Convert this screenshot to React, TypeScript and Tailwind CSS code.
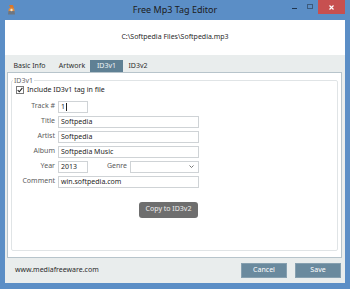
import type { ReactNode } from 'react'

// Free Mp3 Tag Editor — ID3v1 tab, shrunk Windows 8 style dialog.

const font = { fontFamily: '"Noto Sans", "Open Sans", Arial, sans-serif' }

const TABS = ['Basic Info', 'Artwork', 'ID3v1', 'ID3v2']
const tabWidths = ['w-[37px]', 'ml-[6px] w-[36px]', 'w-[33px]', 'w-[30px]']

const inputClass =
  'h-[12px] border border-[#cfd3d6] bg-white px-[2px] text-[7px] leading-[10px] text-[#1f1f1f] flex items-center'

function Row({ label, children }: { label: string; children: ReactNode }) {
  return (
    <div className="flex items-center">
      <span className="w-[43px] text-right text-[7px] text-[#5b5b5b]">{label}</span>
      <div className="ml-[3px] flex items-center">{children}</div>
    </div>
  )
}

function AppIcon() {
  return (
    <svg width="9" height="11" viewBox="0 0 9 11">
      <path d="M2 1 L6 1 L7 4 L4 5 Z" fill="#d9772b" />
      <circle cx="4.5" cy="6.5" r="3" fill="#e08a3a" />
      <path d="M1.5 7 L7.5 7 L8 10.5 L1 10.5 Z" fill="#6f7680" />
      <circle cx="4.5" cy="6" r="1.2" fill="#f6e2c4" />
    </svg>
  )
}

export default function App() {
  return (
    <div className="flex h-[289px] w-[350px] flex-col bg-[#5b8ec6]" style={font}>
      {/* title bar */}
      <div className="relative flex h-[20px] items-center">
        <div className="ml-[7px] mt-[-2px]">
          <AppIcon />
        </div>
        <div className="absolute inset-x-0 top-[4px] text-center text-[9px] leading-[11px] text-[#1b1b1b]">
          Free Mp3 Tag Editor
        </div>
        <div className="ml-auto flex h-full items-start">
          <div className="mt-[8px] h-[1px] w-[5px] bg-[#1f3550]" />
          <div className="ml-[10px] mt-[4px] h-[5px] w-[6px] border border-[#3c5a7c]" />
          <div className="ml-[5px] flex h-[14px] w-[27px] items-center justify-center bg-[#c75050]">
            <svg width="5" height="5" viewBox="0 0 5 5">
              <path d="M0.5 0.5 L4.5 4.5 M4.5 0.5 L0.5 4.5" stroke="#fff" strokeWidth="1.2" />
            </svg>
          </div>
          <div className="w-[5px]" />
        </div>
      </div>

      <div className="mx-[5px] mb-[6px] flex flex-1 flex-col">
        {/* file path header */}
        <div className="flex h-[35px] items-center justify-center bg-white text-[7px] text-[#2a2a2a]">
          C:\Softpedia Files\Softpedia.mp3
        </div>

        <div className="flex flex-1 flex-col bg-[#e9eded]">
          {/* tabs */}
          <div className="flex pl-[6px] pt-[5px]">
            {TABS.map((t, i) => (
              <div
                key={t}
                className={`${tabWidths[i]} h-[12px] text-center text-[7px] leading-[12px] ${
                  t === 'ID3v1' ? 'bg-[#5f8094] text-[#eef3f6]' : 'text-[#2e2e2e]'
                }`}
              >
                {t}
              </div>
            ))}
          </div>

          {/* tab page */}
          <div className="ml-[2px] mr-[3px] flex h-[186px] flex-col border border-[#b7c4cb] bg-white">
            <fieldset className="mx-[3px] mb-[6px] mt-[3px] flex flex-1 flex-col rounded-[2px] border border-[#e0e4e6]">
              <legend className="ml-[1px] px-[1px] text-[7px] leading-[9px] text-[#6a6a6a]">ID3v1</legend>

              <div className="flex items-center pl-[4px]">
                <div className="flex h-[8px] w-[8px] items-center justify-center border border-[#7a7a7a] bg-white">
                  <svg width="6" height="6" viewBox="0 0 6 6">
                    <path d="M0.7 3.2 L2.3 4.8 L5.4 0.9" fill="none" stroke="#222" strokeWidth="1.1" />
                  </svg>
                </div>
                <span className="ml-[3px] text-[7px] text-[#222]">Include ID3v1 tag in file</span>
              </div>

              <div className="mt-[5px] flex flex-col gap-[3px]">
                <Row label="Track #">
                  <div className={`${inputClass} w-[30px] border-[#7ea6d6]`}>
                    1<span className="ml-[1px] h-[8px] w-[1px] bg-[#222]" />
                  </div>
                </Row>
                <Row label="Title">
                  <div className={`${inputClass} w-[141px]`}>Softpedia</div>
                </Row>
                <Row label="Artist">
                  <div className={`${inputClass} w-[141px]`}>Softpedia</div>
                </Row>
                <Row label="Album">
                  <div className={`${inputClass} w-[141px]`}>Softpedia Music</div>
                </Row>
                <Row label="Year">
                  <div className={`${inputClass} w-[30px]`}>2013</div>
                  <span className="w-[39px] text-right text-[7px] text-[#5b5b5b]">Genre</span>
                  <div className={`${inputClass} ml-[3px] w-[69px] justify-end pr-[4px]`}>
                    <svg width="5" height="3" viewBox="0 0 5 3">
                      <path d="M0.5 0.5 L2.5 2.5 L4.5 0.5" fill="none" stroke="#666" strokeWidth="0.9" />
                    </svg>
                  </div>
                </Row>
                <Row label="Comment">
                  <div className={`${inputClass} w-[141px]`}>win.softpedia.com</div>
                </Row>
              </div>

              <div className="mt-[14px] flex pl-[127px]">
                <button className="h-[16px] w-[59px] rounded-[3px] bg-[#6e6e6e] text-[7px] text-[#eeeeee]">
                  Copy to ID3v2
                </button>
              </div>
            </fieldset>
          </div>

          {/* footer */}
          <div className="flex flex-1 items-center pl-[10px] pr-[4px]">
            <span className="text-[7px] text-[#2a2a2a]">www.mediafreeware.com</span>
            <div className="ml-auto flex gap-[8px]">
              <button className="h-[15px] w-[46px] border border-[#86a0b0] bg-[#6a8a9e] text-[7px] text-white">
                Cancel
              </button>
              <button className="h-[15px] w-[46px] border border-[#86a0b0] bg-[#6a8a9e] text-[7px] text-white">
                Save
              </button>
            </div>
          </div>
        </div>
      </div>
    </div>
  )
}
